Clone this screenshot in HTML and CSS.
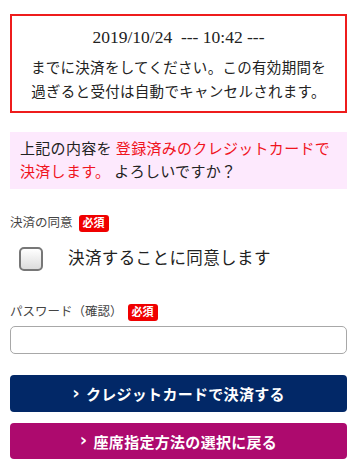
FILE: index.html
```html
<!DOCTYPE html>
<html lang="ja">
<head>
<meta charset="utf-8">
<link rel="stylesheet" href="styles.css">
</head>
<body>
<div class="page">
  <div class="deadline">
    <p class="date">2019/10/24&nbsp; --- 10:42 ---</p>
    <p class="msg">までに決済をしてください。この有効期間を<br>過ぎると受付は自動でキャンセルされます。</p>
  </div>
  <div class="confirm">
    <div class="line">上記の内容を <span class="hl">登録済みのクレジットカードで</span></div>
    <div class="line"><span class="hl">決済します。</span> よろしいですか？</div>
  </div>
  <div class="field-label">決済の同意<span class="badge">必須</span></div>
  <label class="agree">
    <span class="check"></span>
    <span class="agree-text">決済することに同意します</span>
  </label>
  <div class="field-label pw-label">パスワード（確認）<span class="badge">必須</span></div>
  <input class="pw-input" type="password">
  <button class="btn btn-pay"><span class="chev">›</span>クレジットカードで決済する</button>
  <button class="btn btn-back"><span class="chev">›</span>座席指定方法の選択に戻る</button>
</div>
</body>
</html>
```
FILE: styles.css
```css
* { box-sizing: border-box; }
html, body { margin: 0; padding: 0; background: #fff; }
body {
  font-family: "Liberation Serif", "Noto Sans CJK JP", serif;
  color: #222;
}
.page {
  padding: 14px 9px 0 10px;
  display: flex;
  flex-direction: column;
}
.deadline {
  border: 2px solid #ee1c1c;
  padding: 9px 8px 7px;
  text-align: center;
}
.deadline p { margin: 0; }
.date {
  font-size: 17.5px;
  line-height: 24px;
  margin-bottom: 7px !important;
}
.msg {
  font-size: 14.5px;
  line-height: 24px;
  letter-spacing: 0.3px;
}
.confirm {
  margin-top: 19px;
  background: #fde9fd;
  padding: 6px 10px 5px;
  font-size: 15px;
  line-height: 23px;
  letter-spacing: 0.3px;
}
.line { white-space: nowrap; }
.hl { color: #f0141e; }
.field-label {
  margin-top: 24px;
  font-size: 12.5px;
  line-height: 20px;
  color: #444;
  display: flex;
  align-items: center;
}
.badge {
  margin-left: 6px;
  background: #f00000;
  color: #fff;
  font-size: 11px;
  font-weight: bold;
  line-height: 17px;
  padding: 0 4px;
  border-radius: 3px;
}
.pw-label { margin-top: 31px; }
.pw-label .badge { margin-left: 5px; }
.agree {
  margin-top: 14px;
  display: flex;
  align-items: center;
  padding-left: 9px;
}
.check {
  width: 24px;
  height: 24px;
  border: 2px solid #777;
  border-radius: 5px;
  background: linear-gradient(#fff, #dcdcdc);
  flex: none;
}
.agree-text {
  margin-left: 25px;
  font-size: 16.5px;
  line-height: 24px;
  letter-spacing: 0.4px;
  color: #222;
}
.pw-input {
  margin-top: 4px;
  height: 28px;
  width: 100%;
  border: 1.5px solid #a8a8a8;
  border-radius: 5px;
  background: #fff;
}
.btn {
  display: flex;
  align-items: center;
  justify-content: center;
  width: 100%;
  border: none;
  border-radius: 4px;
  color: #fff;
  font-family: "Liberation Serif", "Noto Sans CJK JP", serif;
  font-size: 15px;
  font-weight: bold;
  letter-spacing: 0.3px;
}
.chev {
  font-family: "DejaVu Sans", sans-serif;
  font-size: 18px;
  margin-right: 6px;
  line-height: 1;
  position: relative;
  top: -1px;
}
.btn-pay {
  margin-top: 21px;
  height: 37px;
  background: #022867;
}
.btn-back {
  margin-top: 11px;
  height: 36px;
  background: #ad0a6e;
}
```
